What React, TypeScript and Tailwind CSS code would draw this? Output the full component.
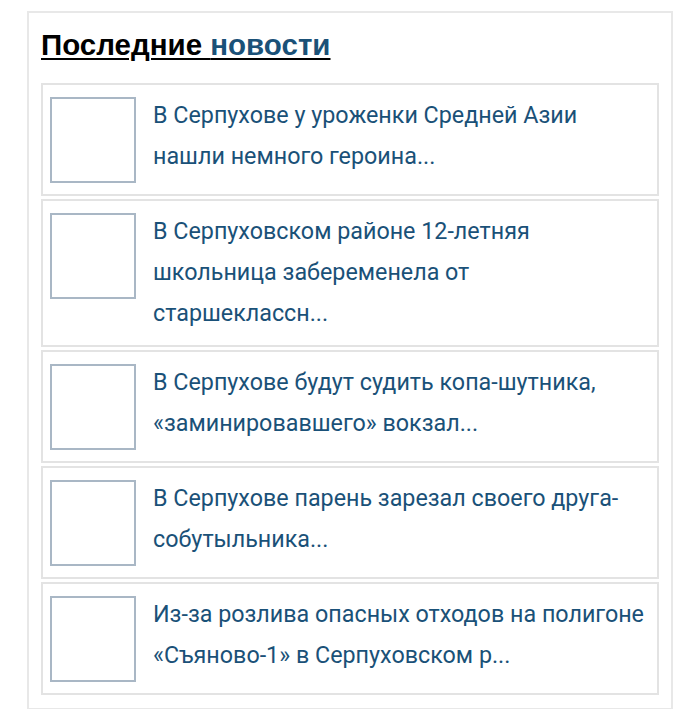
import React from 'react';

const news: string[] = [
  'В Серпухове у уроженки Средней Азии нашли немного героина...',
  'В Серпуховском районе 12-летняя школьница забеременела от старшеклассн...',
  'В Серпухове будут судить копа-шутника, «заминировавшего» вокзал...',
  'В Серпухове парень зарезал своего друга-собутыльника...',
  'Из-за розлива опасных отходов на полигоне «Съяново-1» в Серпуховском р...',
];

export default function App() {
  return (
    <div className="min-h-[709px] bg-white pt-[11px] pl-[27px]">
      <section className="w-[646px] border-2 border-[#e8e8e8] px-[12px] pt-[15px] pb-[13px]">
        <h2 className="text-[29.5px] font-bold leading-[34px] text-black" style={{ fontFamily: '"Liberation Sans", Arial, sans-serif' }}>
          <a href="#" className="underline decoration-2 underline-offset-[3px]">
            Последние <span className="text-[#1a5178]">новости</span>
          </a>
        </h2>
        <div className="mt-[21px] flex flex-col gap-[3px]">
          {news.map((title) => (
            <a
              key={title}
              href="#"
              className="flex border-2 border-[#e3e3e3] pt-[10px] pb-[11px] pl-[7px] pr-[10px]"
            >
              <div className="mt-[2px] h-[86px] w-[86px] shrink-0 border-2 border-[#a9b7c5] bg-white" />
              <p
                className="ml-[17px] text-[23.3px] leading-[41px] text-[#1a5178]"
                style={{ fontFamily: 'Roboto, "Noto Sans", sans-serif' }}
              >
                {title}
              </p>
            </a>
          ))}
        </div>
      </section>
    </div>
  );
}
